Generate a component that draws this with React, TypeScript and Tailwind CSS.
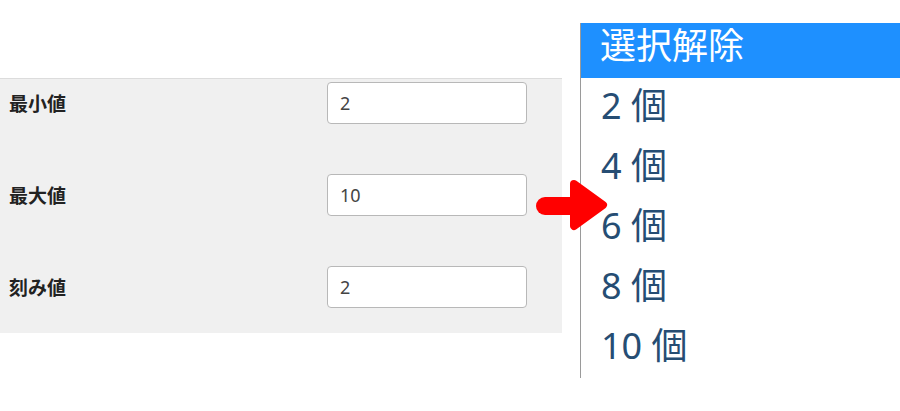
const rows = [
  { label: "最小値", value: "2" },
  { label: "最大値", value: "10" },
  { label: "刻み値", value: "2" },
];

const options = ["2 個", "4 個", "6 個", "8 個", "10 個"];

function ArrowIcon() {
  return (
    <svg width="80" height="60" viewBox="0 0 80 60" className="absolute left-[530px] top-[175px]">
      <rect x="6" y="22" width="50" height="18" rx="9" fill="#ff0000" />
      <polygon
        points="44,9 73,30 44,51"
        fill="#ff0000"
        stroke="#ff0000"
        strokeWidth="8"
        strokeLinejoin="round"
      />
    </svg>
  );
}

export default function App() {
  return (
    <div
      className="relative flex h-[411px] w-[900px] overflow-hidden bg-white"
      style={{ fontFamily: '"Noto Sans", "Noto Sans CJK JP", sans-serif' }}
    >
      <div className="w-[562px] shrink-0 pt-[78px]">
        <div className="flex flex-col gap-[50px] border-t border-[#dcdcdc] bg-[#f0f0f0] pb-[25px] pt-[3px]">
          {rows.map((row) => (
            <div key={row.label} className="flex h-[42px] items-center">
              <span className="w-[327px] pl-[9px] pt-[3px] text-[19px] font-bold text-[#222]">{row.label}</span>
              <div className="flex h-[42px] w-[200px] items-center rounded-[4px] border border-[#b8b8b8] bg-white pl-[12px] text-[18px] text-[#444]">
                {row.value}
              </div>
            </div>
          ))}
        </div>
      </div>

      <div className="ml-[18px] flex-1 pt-[23px]">
        <div className="flex h-[355px] flex-col border-l border-[#9a9a9a]">
          <div className="flex h-[55px] items-center bg-[#1e90ff] pb-[10px] pl-[19px] text-[36px] leading-[40px] text-white">
            選択解除
          </div>
          {options.map((opt) => (
            <div key={opt} className="flex h-[60px] items-center pb-[5px] pl-[20px] text-[36px] leading-[44px] text-[#264d73]">
              {opt}
            </div>
          ))}
        </div>
      </div>

      <ArrowIcon />
    </div>
  );
}
